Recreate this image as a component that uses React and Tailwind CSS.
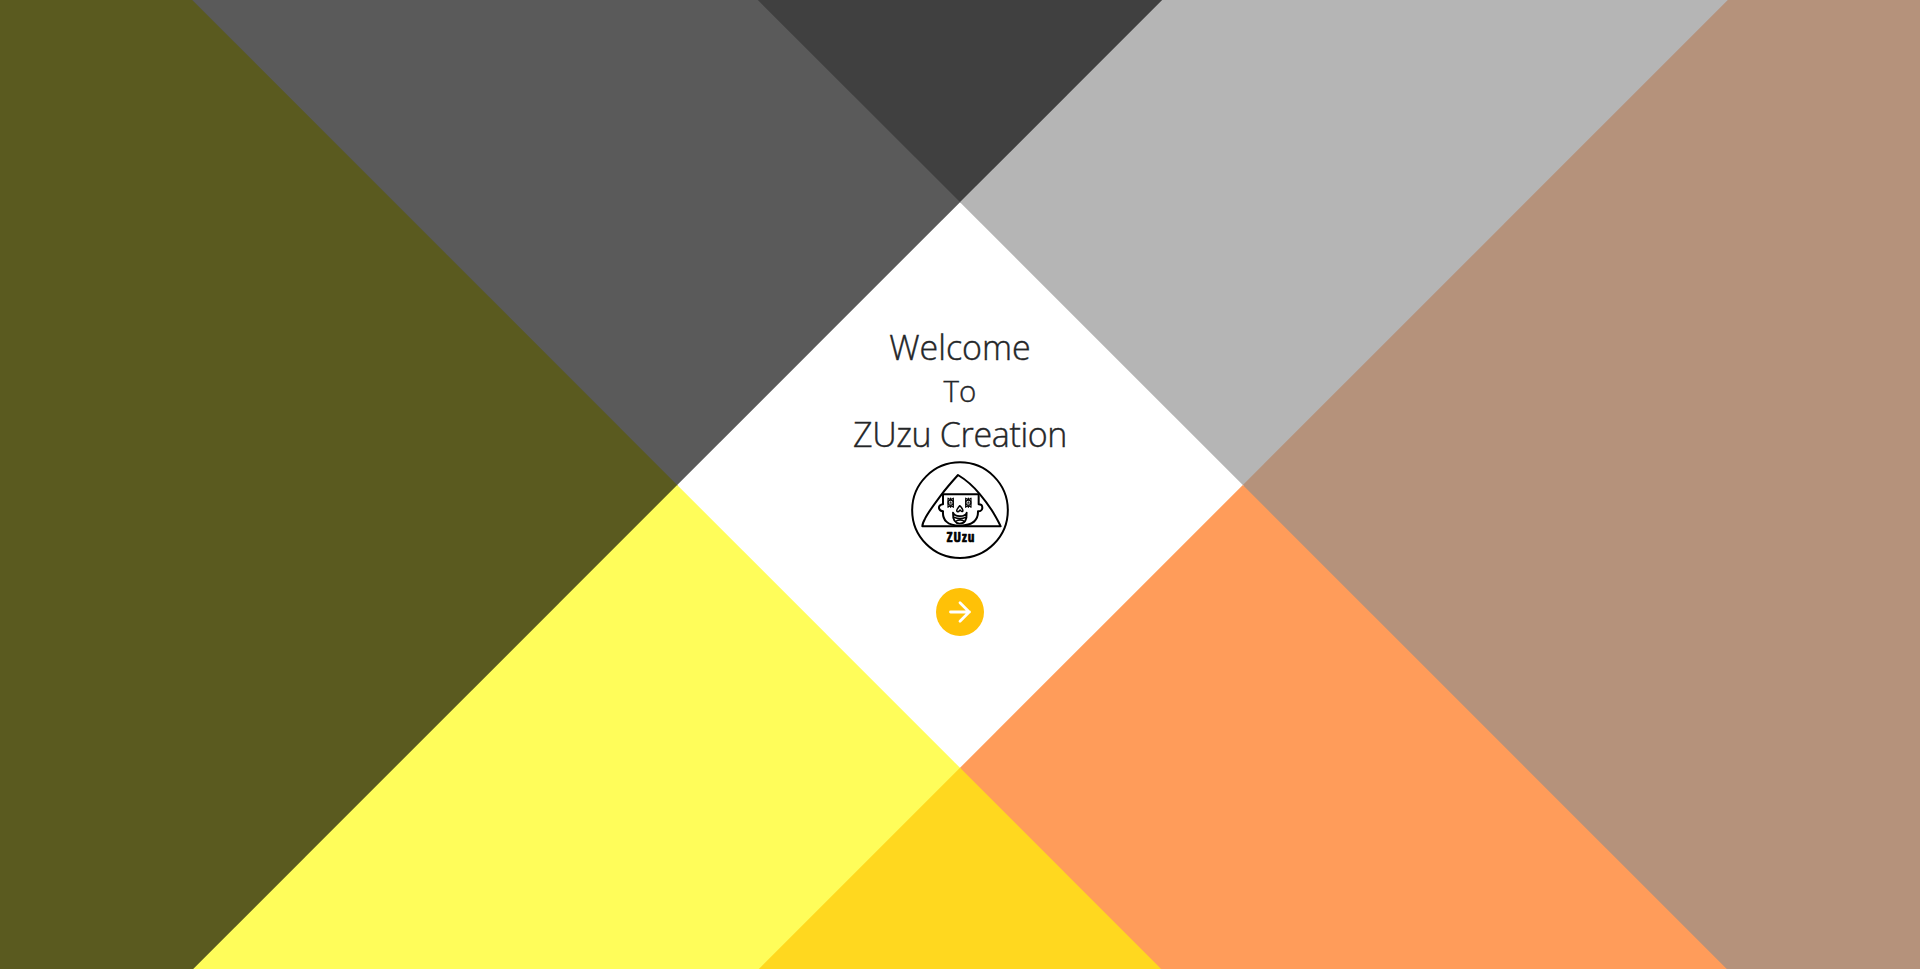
import React from "react";

function Backdrop() {
  return (
    <div className="absolute left-1/2 top-1/2 grid shrink-0 -translate-x-1/2 -translate-y-1/2 rotate-45 grid-cols-[1400px_400px_1400px] grid-rows-[1400px_400px_1400px]">
      <div className="-mb-px -mr-px bg-[#404040]" />
      <div className="-mb-px -mr-px bg-[#b5b5b5]" />
      <div className="-mb-px bg-[#b5927b]" />
      <div className="-mb-px -mr-px bg-[#5a5a5a]" />
      <div className="-mb-px -mr-px bg-white" />
      <div className="-mb-px bg-[#ff9c5a]" />
      <div className="-mr-px bg-[#5a5a1f]" />
      <div className="-mr-px bg-[#fffd5a]" />
      <div className="bg-[#ffd81f]" />
    </div>
  );
}

function Eye({ x }) {
  return (
    <g transform={`translate(${x} 145)`} strokeWidth="3.5">
      <path d="M-8 -14V14M8 -14V14M-8 -13L0 -9L8 -13M-8 13L0 9L8 13M0 -14V-9M0 14V9" />
      <circle r="7.500" fill="#fff" />
      <path strokeWidth="2.500" d="M-4 1H4M0 -3V1" />
    </g>
  );
}

function Logo() {
  return (
    <svg viewBox="30 17 300 300" className="size-[100px]" fill="none" stroke="#000" strokeWidth="6" strokeLinejoin="round" strokeLinecap="round">
      <circle cx="180" cy="167.500" r="143.5" />
      <path d="M174 62C156 82 140 100 125 120C105 147 86 171 75 193C69 204 67 209 67 216H302C297 204 290 192 280 175C268 156 256 139 240 120C222 98 204 80 174 62Z" />
      <path d="M128 119.500H237M129 120V150C121 150 116 156 117 161C118 168 123 170 129 171C127 196 141 214 180 214C219 214 235 196 234 171C242 172 247 166 247 160C247 153 242 150 236 150V120" />
      <Eye x={152} />
      <Eye x={205} />
      <path strokeWidth="4.500" d="M179 154C174 160 166 171 173 172C177 173 179 167 180 167C182 167 184 174 188 171C191 168 183 157 179 154Z" />
      <path strokeWidth="5.500" d="M159 175C158 196 164 207 179 208C195 208 201 196 200 175C196 188 165 190 159 175Z" />
      <path strokeWidth="4.500" d="M163 189C172 194 188 194 197 189M169 200C174 196 187 196 191 200" />
      <text x="182" y="264" textAnchor="middle" textLength="83" lengthAdjust="spacing" fill="#000" stroke="#000" strokeWidth="2" className="font-['Open_Sans',sans-serif] text-[40px] font-bold [font-stretch:75%]">ZUzu</text>
    </svg>
  );
}

export default function App() {
  return (
    <main className="relative flex h-screen w-full items-center justify-center overflow-hidden bg-white font-['Open_Sans','Noto_Sans',sans-serif] text-[#242628]">
      <Backdrop />
      <section className="relative flex h-[311px] flex-col items-center">
        <div className="-mt-[3px] flex h-[134px] flex-col items-center font-light [-webkit-text-stroke:0.4px_#242628]">
          <h1 className="h-[43px] whitespace-nowrap text-[34px] leading-[43px]">Welcome</h1>
          <h2 className="h-[43px] text-[29.500px] leading-[43px]">To</h2>
          <h1 className="h-[45px] whitespace-nowrap text-[34px] leading-[45px] tracking-[-0.35px]">ZUzu Creation</h1>
        </div>
        <Logo />
        <button aria-label="Enter" className="mt-7 flex size-12 shrink-0 items-center justify-center rounded-full bg-[#ffc107]">
          <svg viewBox="0 0 24 24" className="size-6" fill="none" stroke="#fff" strokeWidth="2.800" strokeLinecap="round" strokeLinejoin="round">
            <path d="M2.500 12H21.500M12 2.800L21.200 12L12 21.200" />
          </svg>
        </button>
      </section>
    </main>
  );
}
